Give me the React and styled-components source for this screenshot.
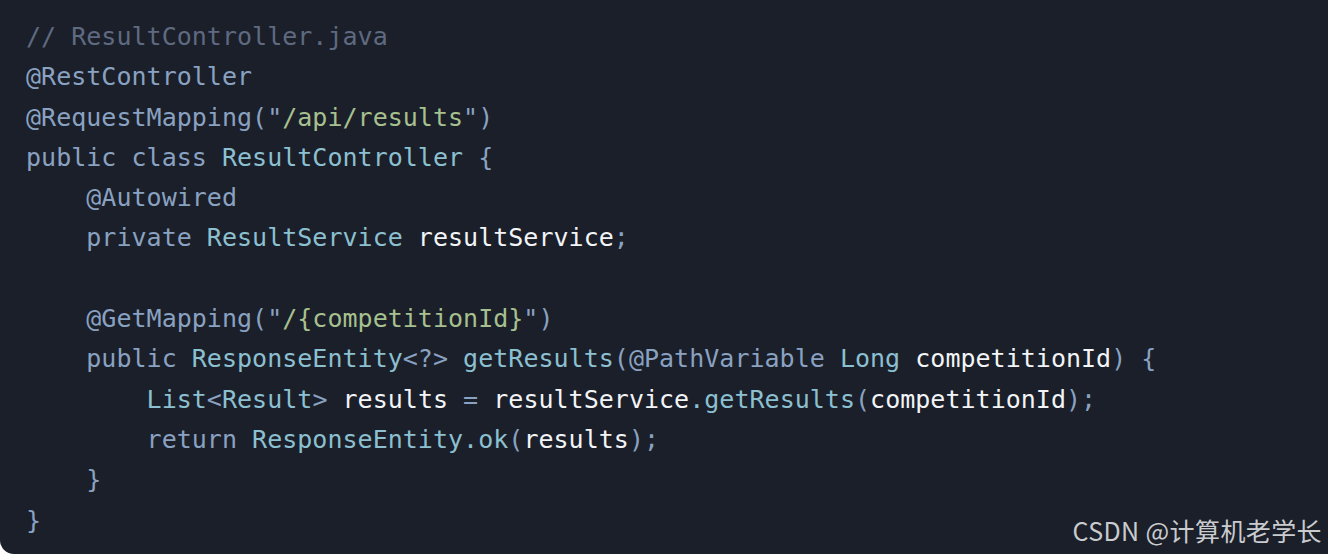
import React from "react";
import styled, { createGlobalStyle } from "styled-components";

const GlobalStyle = createGlobalStyle`
  html, body {
    margin: 0;
    padding: 0;
    background: #ffffff;
  }
`;

const colors = {
  c: "#5f6a81",
  k: "#8aa2c2",
  t: "#8cc0d1",
  s: "#a7c08f",
  v: "#f2f4f7",
  p: "#8aa2c2",
};

export const Block = styled.div`
  position: relative;
  width: 1328px;
  height: 554px;
  box-sizing: border-box;
  background: #1b1f29;
  border-radius: 0 0 0 14px;
  padding: 17px 0 0 26px;
  overflow: hidden;
`;

export const Code = styled.div`
  font-family: "DejaVu Sans Mono", "Liberation Mono", monospace;
  font-size: 25px;
  line-height: 40.3px;
  letter-spacing: 0.02px;
`;

export const Line = styled.div`
  white-space: pre;
  height: 40.3px;
`;

export const Tok = styled.span`
  color: ${(p) => colors[p.$kind]};
`;

export const Watermark = styled.div`
  position: absolute;
  right: 6px;
  bottom: 9px;
  font-family: "Noto Sans CJK SC", "Noto Sans", sans-serif;
  font-size: 25px;
  line-height: 30px;
  color: #c9cbcf;
  letter-spacing: 0.4px;
`;

const lines = [
  [["c", "// ResultController.java"]],
  [["k", "@RestController"]],
  [["k", "@RequestMapping("], ["p", "\""], ["s", "/api/results"], ["p", "\")"]],
  [["k", "public class "], ["t", "ResultController"], ["p", " {"]],
  [["k", "    @Autowired"]],
  [["k", "    private "], ["t", "ResultService"], ["v", " resultService"], ["p", ";"]],
  [],
  [["k", "    @GetMapping("], ["p", "\""], ["s", "/{competitionId}"], ["p", "\")"]],
  [
    ["k", "    public "],
    ["t", "ResponseEntity"],
    ["p", "<?> "],
    ["t", "getResults"],
    ["p", "("],
    ["k", "@PathVariable "],
    ["t", "Long"],
    ["v", " competitionId"],
    ["p", ") {"],
  ],
  [
    ["t", "        List"],
    ["p", "<"],
    ["t", "Result"],
    ["p", "> "],
    ["v", "results "],
    ["p", "= "],
    ["v", "resultService"],
    ["t", ".getResults"],
    ["p", "("],
    ["v", "competitionId"],
    ["p", ");"],
  ],
  [
    ["k", "        return "],
    ["t", "ResponseEntity.ok"],
    ["p", "("],
    ["v", "results"],
    ["p", ");"],
  ],
  [["p", "    }"]],
  [["p", "}"]],
];

const App = () => {
  return (
    <>
      <GlobalStyle />
      <Block>
        <Code>
          {lines.map((toks, i) => (
            <Line key={i}>
              {toks.map(([kind, text], j) => (
                <Tok key={j} $kind={kind}>
                  {text}
                </Tok>
              ))}
            </Line>
          ))}
        </Code>
        <Watermark>CSDN @计算机老学长</Watermark>
      </Block>
    </>
  );
};

export default App;
